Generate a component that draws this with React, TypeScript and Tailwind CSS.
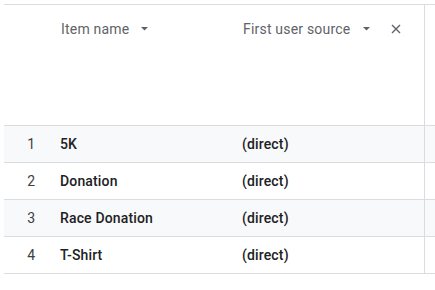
const rows = [
  { n: 1, item: "5K", source: "(direct)" },
  { n: 2, item: "Donation", source: "(direct)" },
  { n: 3, item: "Race Donation", source: "(direct)" },
  { n: 4, item: "T-Shirt", source: "(direct)" },
];

function DropArrow() {
  return (
    <svg width="7" height="4" viewBox="0 0 7 4" className="shrink-0">
      <path d="M0 0h7L3.5 3.5z" fill="#5f6368" />
    </svg>
  );
}

function CloseIcon() {
  return (
    <svg width="10" height="10" viewBox="0 0 10 10" className="shrink-0">
      <path d="M1 1l8 8M9 1l-8 8" stroke="#5f6368" strokeWidth="1.4" />
    </svg>
  );
}

export default function App() {
  return (
    <div className="h-[290px] w-[435px] overflow-hidden bg-white pl-1 pt-1 font-['Roboto',sans-serif] text-sm">
      <div className="w-[440px]">
        {/* header */}
        <div className="flex h-[122px] border-y border-[#dadce0]">
          <div className="w-11 shrink-0" />
          <div className="flex w-[182px] shrink-0 items-start pl-[13px] pt-[14px]">
            <div className="flex items-center gap-3 leading-5 tracking-[0.2px] text-[#5f6368]">
              <span>Item name</span>
              <DropArrow />
            </div>
          </div>
          <div className="flex w-[194px] shrink-0 items-start pl-[13px] pt-[14px]">
            <div className="flex items-center leading-5 tracking-[0.2px] text-[#5f6368]">
              <span>First user source</span>
              <span className="ml-[13px]">
                <DropArrow />
              </span>
              <span className="ml-[21px]">
                <CloseIcon />
              </span>
            </div>
          </div>
          <div className="flex-1 border-l border-[#dadce0]" />
        </div>

        {/* body */}
        {rows.map((r, i) => (
          <div
            key={r.n}
            className={
              "flex h-[37px] border-b border-[#dadce0] " +
              (i % 2 === 0 ? "bg-[#f8f9fa]" : "bg-white")
            }
          >
            <div className="flex w-11 shrink-0 items-center justify-end pr-[13px] text-[#3c4043]">
              {r.n}
            </div>
            <div className="flex w-[182px] shrink-0 items-center pl-3 font-medium tracking-[0.15px] text-[#202124]">
              {r.item}
            </div>
            <div className="flex w-[194px] shrink-0 items-center pl-3 font-medium tracking-[0.15px] text-[#202124]">
              {r.source}
            </div>
            <div className="flex-1 border-l border-[#dadce0]" />
          </div>
        ))}
      </div>
    </div>
  );
}
